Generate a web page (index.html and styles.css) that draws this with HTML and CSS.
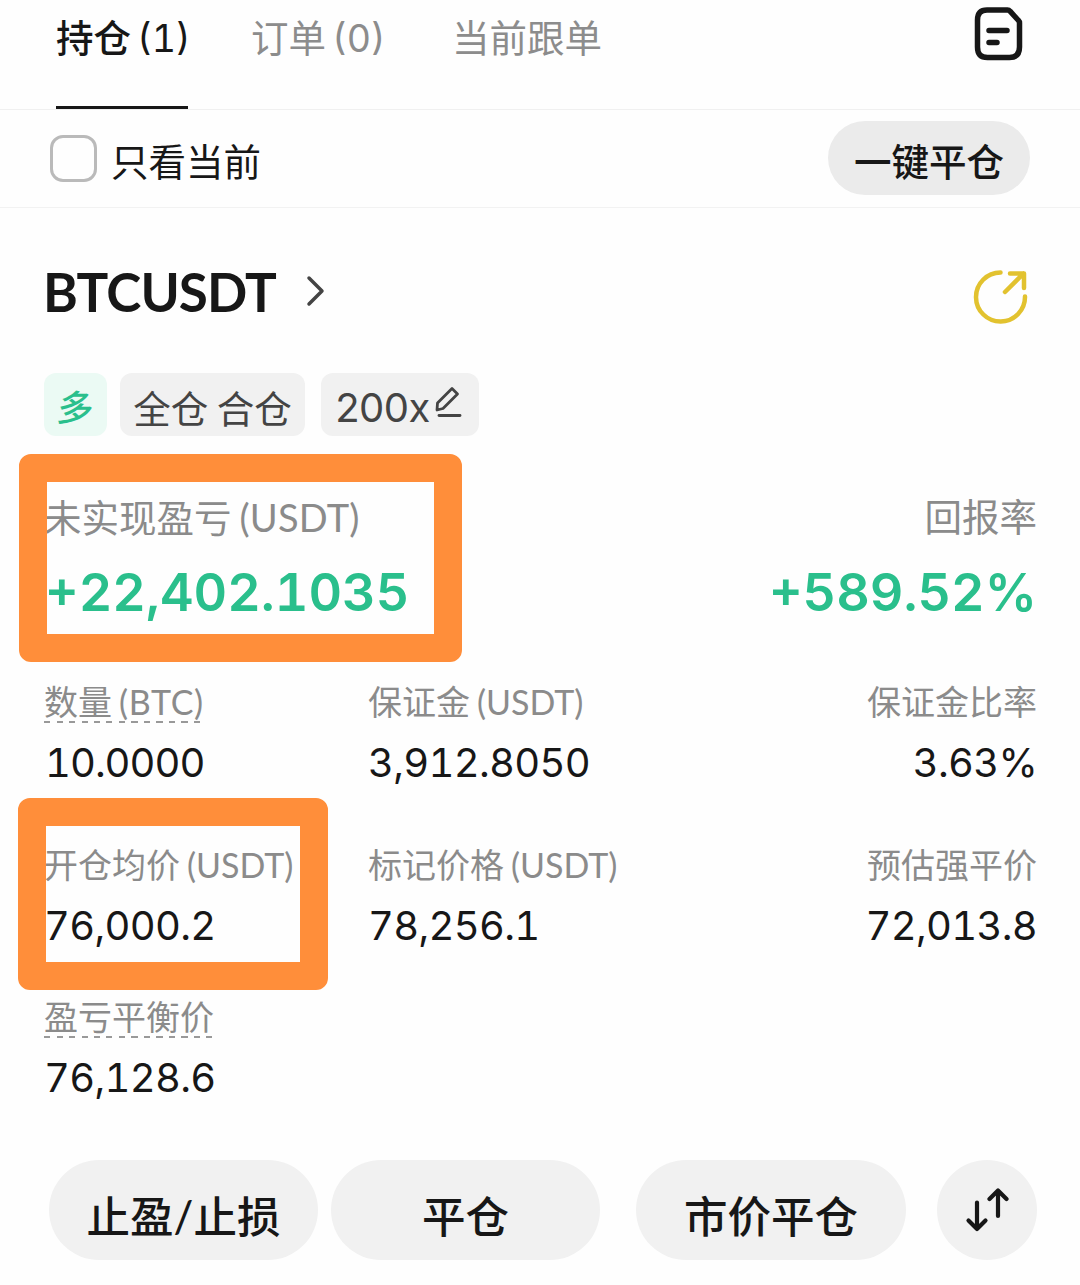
FILE: index.html
```html
<!DOCTYPE html>
<html lang="zh-CN">
<head>
  <meta charset="UTF-8" />
  <meta name="viewport" content="width=device-width, initial-scale=1.0" />
  <title>持仓</title>
  <link rel="stylesheet" href="styles.css">
</head>
<body>
  <nav class="tabs">
    <a class="tab active">持仓<span class="num">(1)</span></a>
    <a class="tab tab-orders">订单<span class="num">(0)</span></a>
    <a class="tab tab-copy">当前跟单</a>
    <svg class="history-icon" width="50" height="56" viewBox="0 0 50 56" fill="none" stroke="#171717" stroke-width="5.500" stroke-linecap="round" stroke-linejoin="round">
      <path d="M13 5H33.500Q35 5 36 6.200L44.500 15.500Q45.500 16.500 45.500 18V42Q45.500 52.500 35.500 52.500H13.500Q3.500 52.500 3.500 42V15Q3.500 5 13 5Z" />
      <path d="M15 25.500H33M15 37.500H23" />
    </svg>
  </nav>

  <div class="filter">
    <label class="only-current"><span class="checkbox"></span><span class="only-text">只看当前</span></label>
    <button class="close-all">一键平仓</button>
  </div>

  <main class="position">
    <div class="symbol-row">
      <h1 class="symbol">BTCUSDT</h1>
      <svg class="chevron" width="20" height="34" viewBox="0 0 20 34" fill="none" stroke="#444" stroke-width="3.500" stroke-linecap="round" stroke-linejoin="round">
        <path d="M3 4L16 17L3 30" />
      </svg>
      <svg class="share" width="58" height="58" viewBox="0 0 58 58" fill="none" stroke="#e2c22f" stroke-width="4.500" stroke-linecap="round" stroke-linejoin="round">
        <path d="M28.500 5.500A24.500 24.500 0 1 0 53 29.500" />
        <path d="M33 25L51.500 6.500M38 6.500H52V21" />
      </svg>
    </div>

    <div class="chips">
      <span class="chip long"><span class="side">多</span></span>
      <span class="chip mode">全仓 合仓</span>
      <span class="chip leverage">200x
        <svg class="edit" width="28" height="34" viewBox="0 0 28 34" fill="none" stroke="#444" stroke-width="2.800" stroke-linecap="round" stroke-linejoin="round">
          <path d="M3.500 17L18 2.500L23.500 8L9 22.500L3 24Z" />
          <path d="M5 29.500H26" />
        </svg>
      </span>
    </div>

    <div class="summary">
      <div class="cell">
        <div class="label">未实现盈亏<span class="unit">(USDT)</span></div>
        <div class="value pnl">+22,402.1035</div>
        <div class="mark mark-pnl"></div>
      </div>
      <div class="cell right">
        <div class="label">回报率</div>
        <div class="value">+589.52%</div>
      </div>
    </div>

    <div class="stats">
      <div class="cell">
        <div class="label"><span class="hint hint-amount">数量<span class="unit">(BTC)</span></span></div>
        <div class="value one">10.0000</div>
      </div>
      <div class="cell">
        <div class="label">保证金<span class="unit">(USDT)</span></div>
        <div class="value">3,912.8050</div>
      </div>
      <div class="cell right">
        <div class="label">保证金比率</div>
        <div class="value">3.63%</div>
      </div>
    </div>

    <div class="stats">
      <div class="cell">
        <div class="label">开仓均价<span class="unit">(USDT)</span></div>
        <div class="value">76,000.2</div>
        <div class="mark mark-entry"></div>
      </div>
      <div class="cell">
        <div class="label">标记价格<span class="unit">(USDT)</span></div>
        <div class="value">78,256.1</div>
      </div>
      <div class="cell right">
        <div class="label">预估强平价</div>
        <div class="value">72,013.8</div>
      </div>
    </div>

    <div class="stats last">
      <div class="cell">
        <div class="label"><span class="hint">盈亏平衡价</span></div>
        <div class="value">76,128.6</div>
      </div>
    </div>

    <div class="actions">
      <button class="btn">止盈/止损</button>
      <button class="btn btn-close">平仓</button>
      <button class="btn btn-market">市价平仓</button>
      <button class="btn btn-swap">
        <svg width="44" height="44" viewBox="0 0 44 44" fill="none" stroke="#171717" stroke-width="4.200" stroke-linecap="round" stroke-linejoin="round">
          <path d="M12 14.500V41M3.500 32.500L12 41L20.500 32.500" />
          <path d="M33 28V2.500M24.500 11L33 2.500L41.500 11" />
        </svg>
      </button>
    </div>
  </main>
</body>
</html>
```
FILE: styles.css
```css
* {
  box-sizing: border-box;
}

body {
  margin: 0;
  width: 1080px;
  height: 1285px;
  overflow: hidden;
  background: #fefefe;
  color: #171717;
  font-family: Lato, 'Noto Sans CJK SC', sans-serif;
}

button {
  border: none;
  padding: 0;
  font-family: inherit;
  color: inherit;
  background: #f1f1f1;
}

svg {
  display: block;
  flex: none;
}

.tabs {
  display: flex;
  align-items: flex-start;
  height: 110px;
  padding-left: 56px;
  border-bottom: 1px solid #f0f0f0;
}

.tab {
  height: 109px;
  font-size: 37.5px;
  line-height: 76px;
  color: #8c8c8c;
  white-space: nowrap;
}

.tab.active {
  width: 132px;
  font-weight: 500;
  color: #171717;
  border-bottom: 3px solid #171717;
}

.num {
  margin-left: 6px;
  font-family: Inter, sans-serif;
  font-size: 37.5px;
  font-weight: 400;
  font-variant-numeric: tabular-nums;
}

.tab-orders {
  width: 132px;
  margin-left: 63px;
}

.tab-copy {
  margin-left: 69px;
}

.history-icon {
  margin: 5px 56px 0 auto;
}

.filter {
  display: flex;
  align-items: center;
  justify-content: space-between;
  height: 98px;
  padding: 0 50px 1px;
  border-bottom: 1px solid #f2f2f2;
}

.only-current {
  display: flex;
  align-items: center;
  font-size: 37.5px;
  line-height: 46px;
}

.only-text {
  padding-top: 7px;
}

.checkbox {
  width: 47px;
  height: 47px;
  margin-right: 14px;
  border: 3px solid #bababa;
  border-radius: 13px;
}

.close-all {
  width: 202px;
  height: 74px;
  padding-top: 8px;
  border-radius: 37px;
  font-size: 37.5px;
  font-weight: 500;
  line-height: 60px;
  background: #ebebeb;
}

.position {
  padding: 53px 44px 0;
}

.symbol-row {
  display: flex;
  align-items: center;
  height: 64px;
}

.symbol {
  margin: -2px 0 0 -1px;
  width: 263px;
  font-size: 53px;
  font-weight: 700;
  line-height: 64px;
  letter-spacing: -0.9px;
}

.chevron {
  margin-top: -5px;
}

.share {
  margin: 6px 6px 0 auto;
}

.chips {
  display: flex;
  height: 63px;
  margin-top: 48px;
}

.chip {
  display: flex;
  align-items: center;
  justify-content: center;
  border-radius: 12px;
  background: #f1f1f1;
  color: #444;
  font-size: 37.5px;
  white-space: nowrap;
  padding-top: 4px;
}

.long {
  width: 63px;
  background: #ebfaf4;
  color: #2abf8c;
  font-size: 36px;
  font-weight: 500;
  padding: 1px 0 0 1px;
}

.side {
  transform: skewX(-8deg);
}

.mode {
  width: 185px;
  margin-left: 13px;
  word-spacing: -1px;
}

.leverage {
  width: 158px;
  margin-left: 16px;
  padding: 6px 3px 0 0;
  font-family: Inter, sans-serif;
  font-size: 40px;
  letter-spacing: -0.5px;
}

.edit {
  margin: -10px 0 0 4px;
}

.summary {
  display: flex;
  justify-content: space-between;
  margin-top: 59px;
}

.cell {
  position: relative;
}

.right {
  text-align: right;
  margin-right: -1px;
}

.label {
  color: #8b8b8b;
  font-weight: 400;
  white-space: nowrap;
}

.summary .label {
  height: 44px;
  font-size: 37.5px;
  line-height: 44px;
}

.unit {
  margin-left: 7px;
}

.summary .unit {
  margin-left: 8px;
  font-size: 38px;
  letter-spacing: 0.2px;
}

.summary .value {
  margin-top: 24px;
  color: #2abf8c;
  font-family: Inter, sans-serif;
  font-size: 52px;
  font-weight: 600;
  font-variant-numeric: tabular-nums;
  line-height: 60px;
}

.summary .pnl {
  margin-left: 1px;
}

.stats {
  display: grid;
  grid-template-columns: 324px 1fr 1fr;
  margin-top: 59px;
}

.stats.last {
  margin-top: 48px;
}

.stats .label {
  height: 40px;
  font-size: 34px;
  line-height: 40px;
}

.stats .value {
  margin-top: 18px;
  font-family: Inter, sans-serif;
  font-size: 40px;
  font-variant-numeric: tabular-nums;
  line-height: 46px;
  letter-spacing: -0.7px;
  white-space: nowrap;
}

.stats .one {
  padding-left: 1px;
  letter-spacing: -1px;
}

.hint {
  display: inline-block;
  height: 41px;
  background: repeating-linear-gradient(to right, #999 0 6px, transparent 6px 12.5px) left bottom / 168px 2px no-repeat;
}

.hint-amount .unit {
  letter-spacing: 0.7px;
}

/* thick frames drawn over the highlighted figures */
.mark {
  position: absolute;
  border: 28px solid #ff8e3a;
  border-radius: 12px;
}

.mark-pnl {
  left: -25px;
  top: -41px;
  width: 443px;
  height: 208px;
}

.mark-entry {
  left: -26px;
  top: -47px;
  width: 310px;
  height: 192px;
}

.actions {
  display: flex;
  margin: 59px -4px 0 5px;
}

.btn {
  width: 269px;
  height: 100px;
  padding-top: 11px;
  border-radius: 50px;
  font-size: 43.5px;
  font-weight: 500;
  line-height: 60px;
}

.btn-close {
  margin-left: 13px;
}

.btn-market {
  width: 270px;
  margin-left: 36px;
}

.btn-swap {
  display: flex;
  align-items: center;
  justify-content: center;
  width: 100px;
  margin-left: 31px;
  padding-top: 0;
}
```
